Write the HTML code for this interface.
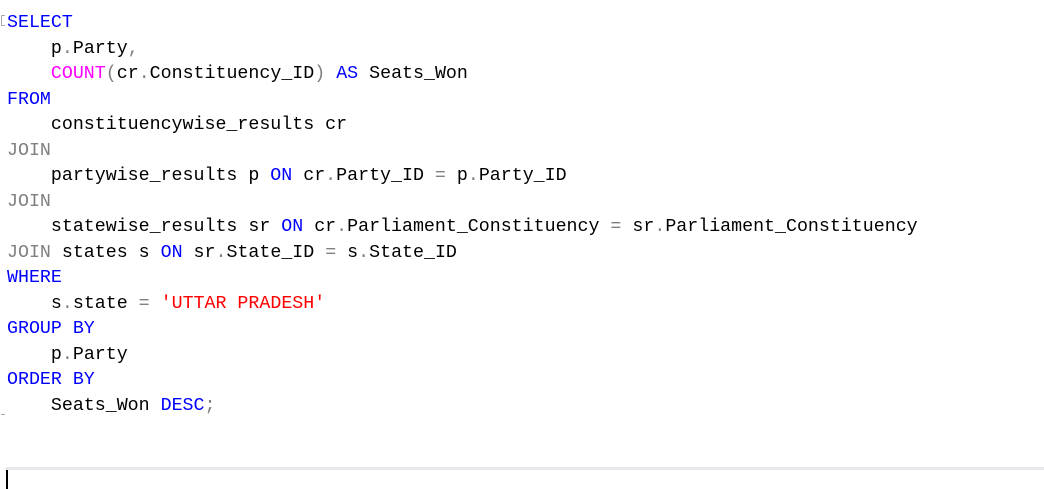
<!DOCTYPE html>
<html><head><meta charset="utf-8"><style>
html,body{margin:0;padding:0;background:#fff;width:1044px;height:489px;overflow:hidden;position:relative}
pre{position:absolute;left:7px;top:11px;margin:0;font-family:"Liberation Mono",monospace;font-size:18.3px;line-height:25.53px;color:#000}
.k{color:#0000ff}.g{color:#808080}.m{color:#ff00ff}.r{color:#ff0000}
.sep{position:absolute;left:6px;top:467px;width:1038px;height:3px;background:#e8e8ec}
.cur{position:absolute;left:6px;top:470px;width:2px;height:19px;background:#000}
.mk{position:absolute;left:1px;top:15px;width:3px;height:9px;border:1px solid #aaa;border-right:none}
.mk2{position:absolute;left:1px;top:414px;width:4px;height:1px;background:#aaa}
</style></head><body>
<div class="mk"></div><div class="mk2"></div>
<pre><span class="k">SELECT</span>
    p<span class="g">.</span>Party<span class="g">,</span>
    <span class="m">COUNT</span><span class="g">(</span>cr<span class="g">.</span>Constituency_ID<span class="g">)</span> <span class="k">AS</span> Seats_Won
<span class="k">FROM</span>
    constituencywise_results cr
<span class="g">JOIN</span>
    partywise_results p <span class="k">ON</span> cr<span class="g">.</span>Party_ID <span class="g">=</span> p<span class="g">.</span>Party_ID
<span class="g">JOIN</span>
    statewise_results sr <span class="k">ON</span> cr<span class="g">.</span>Parliament_Constituency <span class="g">=</span> sr<span class="g">.</span>Parliament_Constituency
<span class="g">JOIN</span> states s <span class="k">ON</span> sr<span class="g">.</span>State_ID <span class="g">=</span> s<span class="g">.</span>State_ID
<span class="k">WHERE</span>
    s<span class="g">.</span>state <span class="g">=</span> <span class="r">'UTTAR PRADESH'</span>
<span class="k">GROUP BY</span>
    p<span class="g">.</span>Party
<span class="k">ORDER BY</span>
    Seats_Won <span class="k">DESC</span><span class="g">;</span></pre>
<div class="sep"></div><div class="cur"></div>
</body></html>
